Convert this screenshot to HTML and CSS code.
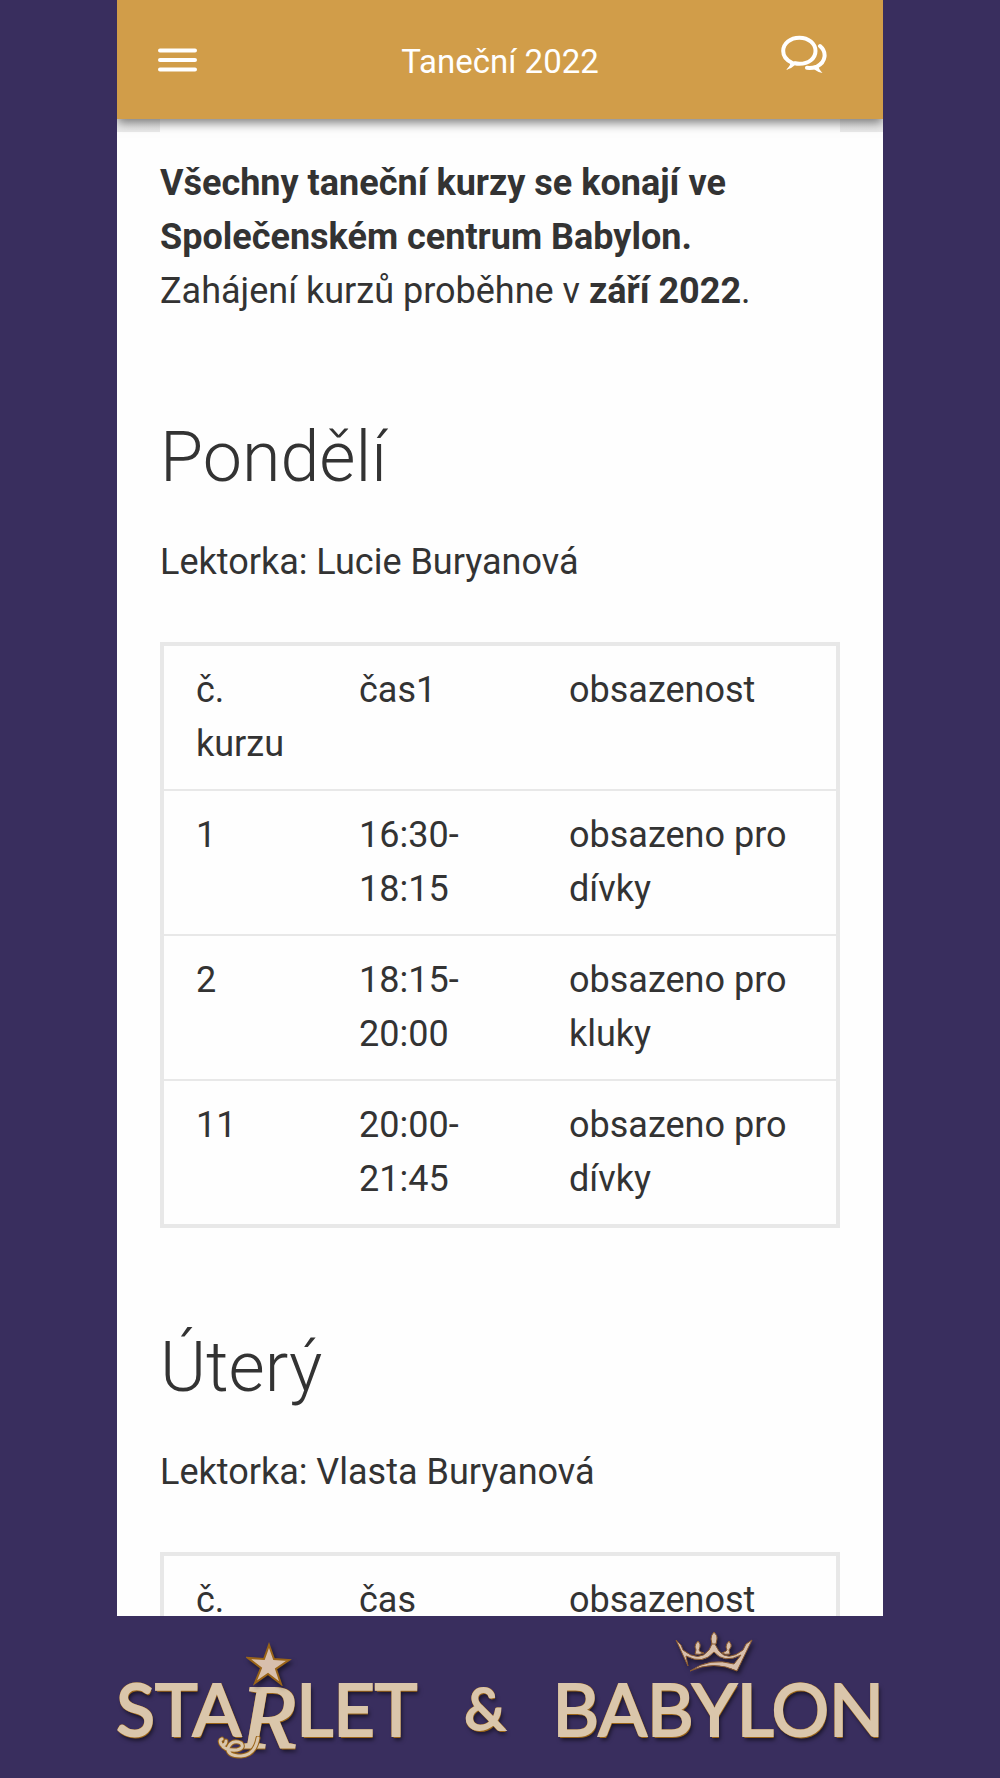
FILE: index.html
```html
<!DOCTYPE html>
<html lang="cs">
<head>
  <meta charset="UTF-8">
  <meta name="viewport" content="width=device-width, initial-scale=1.0">
  <title>Taneční 2022</title>
  <link rel="stylesheet" href="styles.css">
</head>
<body>

<div class="app">
  <header class="topbar">
    <button class="icon-btn" type="button" aria-label="Menu">
      <svg width="39" height="24" viewBox="0 0 39 24" fill="none" stroke="#fff" stroke-width="4" stroke-linecap="round">
        <path d="M2 2.5h35M2 12h35M2 21.5h35"/>
      </svg>
    </button>
    <h1 class="topbar-title">Taneční 2022</h1>
    <button class="icon-btn chat-btn" type="button" aria-label="Zprávy">
      <svg width="46" height="38" viewBox="0 0 46 38" fill="none" stroke="#fff" stroke-linecap="round" stroke-linejoin="round">
        <path stroke-width="4" d="M10.500 27.500C5.500 25 2.200 21 2.200 16C2.200 8.500 9.300 2.700 18.400 2.700S34.500 8.500 34.500 16S27.500 28.800 18.400 28.800Q16 28.800 14 28.300"/>
        <path fill="#fff" stroke="none" d="M9 26q2 3-4 9q5-1 9-5l2-3z"/>
        <path stroke-width="4" d="M39 11C46 17 45 27 36 31.500M26 32.800Q31 33.300 35 31.800"/>
        <path fill="#fff" stroke="none" d="M37.500 31q0 3 4 7q-5-1-9-4l2-4z"/>
      </svg>
    </button>
  </header>

  <main class="content">
    <p class="intro">
      <strong>Všechny taneční kurzy se konají ve Společenském centrum Babylon.</strong><br>
      Zahájení kurzů proběhne v <strong>září 2022</strong>.
    </p>

    <!-- Pondělí -->
    <section class="day">
      <h2>Pondělí</h2>
      <p>Lektorka: Lucie Buryanová</p>
      <table>
        <thead>
          <tr>
            <th class="col-number">č. kurzu</th>
            <th class="col-time">čas1</th>
            <th>obsazenost</th>
          </tr>
        </thead>
        <tbody>
          <tr>
            <td>1</td>
            <td>16:30-<br>18:15</td>
            <td>obsazeno pro dívky</td>
          </tr>
          <tr>
            <td>2</td>
            <td>18:15-<br>20:00</td>
            <td>obsazeno pro kluky</td>
          </tr>
          <tr>
            <td>11</td>
            <td>20:00-<br>21:45</td>
            <td>obsazeno pro dívky</td>
          </tr>
        </tbody>
      </table>
    </section>

    <!-- Úterý -->
    <section class="day">
      <h2>Úterý</h2>
      <p>Lektorka: Vlasta Buryanová</p>
      <table>
        <thead>
          <tr>
            <th class="col-number">č. kurzu</th>
            <th class="col-time">čas</th>
            <th>obsazenost</th>
          </tr>
        </thead>
      </table>
    </section>
  </main>
</div>

<footer class="brand">
  <span class="brand-word">STA<span class="brand-r">R<svg class="star" width="46" height="44" viewBox="0 0 46 44">
      <path fill="#d8bfac" stroke="#9a6418" stroke-width="2" d="M23 3l5 14l15 1l-13 9l5 15l-13-10l-13 9l6-15l-13-10l16 1z"/>
    </svg><svg class="curl" width="44" height="24" viewBox="0 0 44 24" fill="none" stroke-linecap="round">
      <path stroke="#9a6418" stroke-width="5" d="M41 2Q38 19 24 20Q10 20 11 12Q15 3 24 7Q28 12 20 14Q8 15 4 8Q2 4 5 3M5 9Q9 9 9 5"/>
      <path stroke="#dac6ab" stroke-width="3" d="M41 2Q38 19 24 20Q10 20 11 12Q15 3 24 7Q28 12 20 14Q8 15 4 8Q2 4 5 3M5 9Q9 9 9 5"/>
    </svg></span>LET</span>
  <span class="brand-and">&amp;</span>
  <span class="brand-word">BAB<span class="brand-y">Y<svg class="crown" width="78" height="42" viewBox="0 0 78 42">
      <path fill="#d8bfac" stroke="#8a5a30" stroke-width="1" d="M1 9L6 14L8 19Q24 32 34 19Q38 13 38 6q2 9 6 14Q53 31 68 19L71 13L77 9L62 40Q39 29 15 40Q35 26 59 33L66 24Q49 33 39 21Q28 34 11 25L13 35z"/>
      <path fill="#d8bfac" stroke="#8a5a30" stroke-width="1" d="M39 1q4 4 3 7l-1 5h-4l-1-5q0-4 3-7zM23 10q3 3 2 6l-1 3q0 2 5 3q-4 2-9 1l1-4q0-1-1-3q0-3 3-6zM54 10q3 4 2 6l-2 3l1 4q-5 1-8-1q5-2 5-3l-1-3q0-3 3-6z"/>
    </svg></span>LON</span>
</footer>

</body>
</html>
```

FILE: styles.css
```css
/* RESET & BASE */
* {
  box-sizing: border-box;
  margin: 0;
  padding: 0;
}
body {
  height: 100vh;
  display: flex;
  flex-direction: column;
  align-items: center;
  overflow: hidden;
  background-color: #392e5e;
  color: #333;
  font-family: Roboto, sans-serif;
  font-size: 36px;
  line-height: 54px;
}

/* APP */
.app {
  flex: 1;
  min-height: 0;
  width: 100%;
  max-width: 766px;
  display: flex;
  flex-direction: column;
  background: #fefefe;
}

/* TOP BAR */
.topbar {
  position: relative;
  z-index: 1;
  flex: none;
  height: 119px;
  padding: 0 41px;
  display: grid;
  grid-template-columns: 1fr auto 1fr;
  align-items: center;
  background: #d19d49;
  box-shadow: 0 4px 10px rgba(0,0,0,0.5);
  clip-path: inset(0 0 -20px 0);
}
/* darker shadow beside the text column */
.topbar::before,
.topbar::after {
  content: "";
  position: absolute;
  top: 100%;
  width: 43px;
  height: 13px;
  background: linear-gradient(rgba(0,0,0,0.05), rgba(0,0,0,0.08));
}
.topbar::before { left: 0; }
.topbar::after { right: 0; }
.topbar-title {
  padding-top: 4px;
  color: #fff;
  font-size: 33px;
  font-weight: 400;
}
.icon-btn {
  justify-self: start;
  border: none;
  background: none;
  cursor: pointer;
}
.icon-btn svg {
  display: block;
}
.chat-btn {
  justify-self: end;
  padding: 0 15px 12px 0;
}

/* CONTENT */
.content {
  flex: 1;
  min-height: 0;
  padding: 37px 43px 0;
  overflow-y: auto;
  scrollbar-width: none;
}
.day {
  margin-top: 97px;
}
.day h2 {
  margin-bottom: 36px;
  font-size: 70px;
  font-weight: 300;
  line-height: 84px;
}
.day p {
  margin-bottom: 53px;
}

/* TABLE */
table {
  width: 100%;
  table-layout: fixed;
  border-collapse: separate;
  border-spacing: 0;
  border: 4px solid #e8e8e8;
}
th, td {
  padding: 17px 32px 18px;
  border-bottom: 2px solid #e8e8e8;
  font-weight: 400;
  text-align: left;
  vertical-align: top;
}
tbody tr:last-child td {
  border-bottom: none;
}
.col-number { width: 163px; }
.col-time { width: 210px; }

/* BRAND */
.brand {
  flex: none;
  width: 100%;
  max-width: 768px;
  height: 162px;
  padding-top: 44px;
  display: flex;
  justify-content: space-between;
  color: #dac6ab;
  font-family: Lato, sans-serif;
  font-size: 72px;
  font-weight: 400;
  line-height: 96px;
  -webkit-text-stroke: 2px #dac6ab;
  text-shadow: -1px -1px #9a6418, 1px -1px #9a6418, -1px 1px #9a6418, 1px 2px #9a6418, 2px 4px 4px rgba(0,0,0,0.6);
}
.brand-word {
  white-space: nowrap;
}
.brand-and {
  font-size: 58px;
}
.brand-r,
.brand-y {
  position: relative;
}
.brand-r {
  font-family: "Liberation Serif", serif;
  font-size: 90px;
  font-style: italic;
  line-height: 1;
  vertical-align: -12px;
}
.star,
.crown {
  position: absolute;
  left: 50%;
  transform: translateX(-50%);
  filter: drop-shadow(2px 3px 2px rgba(0,0,0,0.5));
}
.star { top: -26px; }
.crown { top: -34px; }
.curl {
  position: absolute;
  top: 68px;
  left: -24px;
}
```
